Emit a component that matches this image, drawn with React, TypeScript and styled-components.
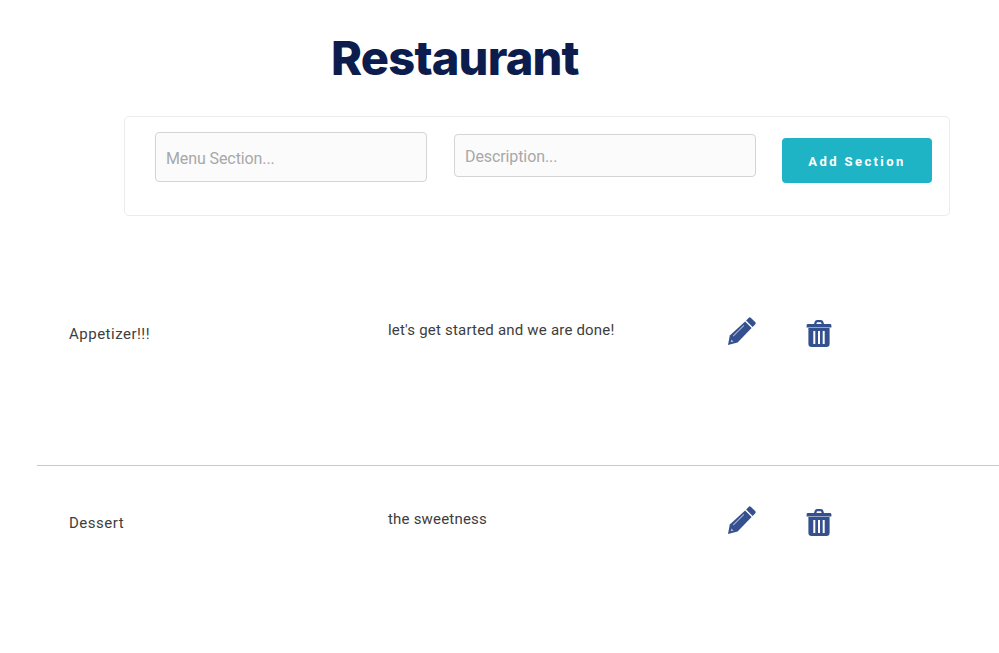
import React from "react";
import styled, { createGlobalStyle } from "styled-components";

const Global = createGlobalStyle`
  html, body { margin: 0; padding: 0; background: #fff; }
  body { font-family: "Roboto", "Liberation Sans", sans-serif; overflow: hidden; }
  * { box-sizing: border-box; }
`;

const Page = styled.div`
  width: 999px;
  height: 653px;
  display: flex;
  flex-direction: column;
`;

const Title = styled.h1`
  flex: none;
  margin: 0;
  padding: 28px 0 0 331px;
  height: 116px;
  font-family: "Inter", sans-serif;
  font-weight: 800;
  font-size: 47px;
  line-height: 60px;
  letter-spacing: -0.8px;
  color: #0b1c4d;
`;

const FormCard = styled.form`
  flex: none;
  margin-left: 124px;
  width: 826px;
  height: 100px;
  padding: 15px 17px 0 30px;
  border: 1px solid #ececec;
  border-radius: 5px;
  display: flex;
  align-items: flex-start;
`;

const Field = styled.input<{ $w: number; $h: number; $top: number; $gap: number }>`
  width: ${(p) => p.$w}px;
  height: ${(p) => p.$h}px;
  margin-top: ${(p) => p.$top}px;
  margin-right: ${(p) => p.$gap}px;
  padding: 2px 10px 0;
  border: 1px solid #d4d4d4;
  border-radius: 4px;
  background: #fbfbfb;
  font-family: "Roboto", sans-serif;
  font-size: 16px;
  letter-spacing: -0.1px;
  &::placeholder { color: #a8a8a8; opacity: 1; }
`;

const AddButton = styled.button`
  width: 150px;
  height: 45px;
  margin-top: 6px;
  padding: 2px 0 0;
  border: 0;
  border-radius: 4px;
  background: #1fb3c6;
  color: #fff;
  font-family: "Roboto", sans-serif;
  font-weight: 700;
  font-size: 13px;
  letter-spacing: 2.4px;
`;

const List = styled.div`
  flex: none;
  margin: 0 0 0 37px;
  padding-top: 69px;
`;

const Row = styled.div<{ $h: number; $line?: boolean }>`
  height: ${(p) => p.$h}px;
  border-top: ${(p) => (p.$line ? "1px solid #c9c9c9" : "0")};
  display: grid;
  grid-template-columns: 351px 340px 78px 40px;
  padding-top: ${(p) => (p.$line ? "38px" : "30px")};
`;

const Name = styled.div`
  padding: 9px 0 0 32px;
  font-size: 15px;
  line-height: 20px;
  letter-spacing: 0.5px;
  color: #3d3d3d;
`;

const Desc = styled.div`
  padding-top: 5px;
  font-size: 15px;
  line-height: 20px;
  letter-spacing: 0.2px;
  color: #3d3d3d;
`;

const IconSlot = styled.div<{ $top: number }>`
  padding-top: ${(p) => p.$top}px;
  display: flex;
  align-items: flex-start;
`;

const Pencil = () => (
  <svg width="28" height="28" viewBox="0 0 28 28" fill="#34508e">
    <path d="M20.6 .9 Q21.8 -.3 23 .9 L27.1 5 Q28.3 6.2 27.1 7.4 L24.6 9.9 L18.1 3.4 Z" />
    <path d="M17.1 4.4 L23.6 10.9 L9.6 25.6 L0 28 L1.8 18.6 Z" />
    <path fill="#a9b6d3" d="M4.8 18.8 L15.6 8 L16.3 8.7 L5.5 19.5 Z M3.2 22.4 L2.7 25.2 L5.6 24.7 L4.4 23.6 Z" />
  </svg>
);

const Trash = () => (
  <svg width="26" height="28" viewBox="0 0 26 28" fill="#34508e">
    <path fillRule="evenodd" d="M8 4 L8.8 1.6 Q9.3 0 11 0 H15 Q16.7 0 17.2 1.6 L18 4 H24 Q25.4 4 25.4 5.4 V7.4 H.6 V5.4 Q.6 4 2 4 Z M10.4 4 H15.6 L15 2.2 H11 Z" />
    <path fillRule="evenodd" d="M2.4 8 H23.6 V23.8 Q23.6 27 20.4 27 H5.6 Q2.4 27 2.4 23.8 Z M7.3 11 V24 H9.3 V11 Z M12 11 V24 H14 V11 Z M16.7 11 V24 H18.7 V11 Z" />
  </svg>
);

const sections = [
  { name: "Appetizer!!!", desc: "let's get started and we are done!", h: 180 },
  { name: "Dessert", desc: "the sweetness", h: 160 },
];

export default function App() {
  return (
    <Page>
      <Global />
      <Title>Restaurant</Title>
      <FormCard>
        <Field $w={272} $h={50} $top={0} $gap={27} placeholder="Menu Section..." />
        <Field $w={302} $h={43} $top={2} $gap={26} placeholder="Description..." />
        <AddButton type="button">Add Section</AddButton>
      </FormCard>
      <List>
        {sections.map((s, i) => (
          <Row key={s.name} $h={s.h} $line={i > 0}>
            <Name>{s.name}</Name>
            <Desc>{s.desc}</Desc>
            <IconSlot $top={2}>
              <Pencil />
            </IconSlot>
            <IconSlot $top={5}>
              <Trash />
            </IconSlot>
          </Row>
        ))}
      </List>
    </Page>
  );
}
